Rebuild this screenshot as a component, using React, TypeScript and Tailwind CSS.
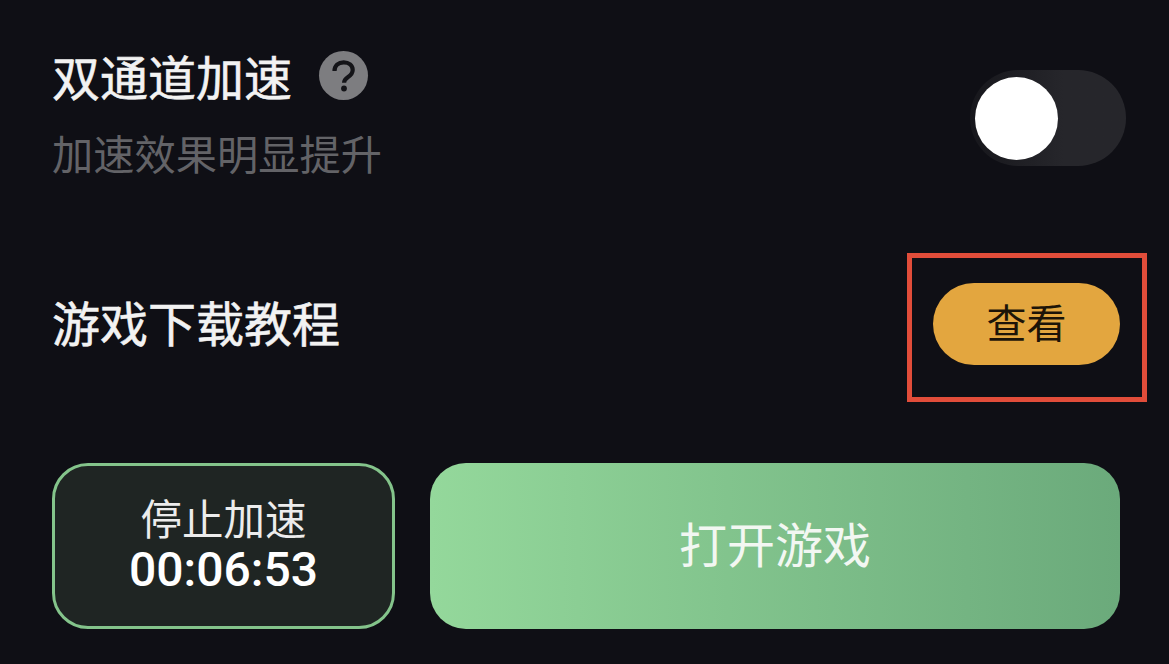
export default function App() {
  return (
    <div className="h-[664px] w-full overflow-hidden bg-[#0f0f15] pl-[52px] pr-[49px] font-['Noto_Sans_CJK_SC','Liberation_Sans',sans-serif]">
      {/* Dual channel row */}
      <div className="flex items-start justify-between pt-[43px]">
        <div>
          <div className="flex h-[64px] items-center">
            <span className="text-[48px] leading-[64px] text-[#f2f2f2] [-webkit-text-stroke:0.6px_#f2f2f2]">双通道加速</span>
            <span className="ml-[27px] flex h-[49px] w-[49px] items-center justify-center rounded-full bg-[#7d7d80]">
              <svg viewBox="0 0 49 49" className="h-[49px] w-[49px]" fill="none">
                <path d="M15.5 20c0-5.4 4-8.7 9.2-8.7 5 0 9 3 9 7.7 0 3.6-2.2 5.3-4.6 6.9-2.4 1.6-4 3-4 5.9" stroke="#141418" strokeWidth="4.2" />
                <circle cx="25" cy="37.5" r="2.9" fill="#141418" />
              </svg>
            </span>
          </div>
          <p className="mt-[17px] text-[41.25px] leading-[56px] text-[#636367]">加速效果明显提升</p>
        </div>
        <div className="-mr-[6px] mt-[27px] flex h-[96px] w-[156px] items-center rounded-full bg-gradient-to-r from-[#17171c] to-[#26262b] to-60% pl-[5px]">
          <div className="h-[83px] w-[83px] rounded-full bg-white" />
        </div>
      </div>

      {/* Tutorial row */}
      <div className="mt-[103px] flex items-center justify-between">
        <span className="pb-[6px] text-[48px] leading-[64px] text-[#f2f2f2] [-webkit-text-stroke:0.6px_#f2f2f2]">游戏下载教程</span>
        <div className="relative">
          <button className="flex h-[82px] w-[187px] items-center justify-center rounded-full bg-[#e3a63f] pb-[6px] text-[40px] leading-none text-[#1c1408]">
            查看
          </button>
          <div className="absolute -left-[26px] -right-[27px] -top-[30px] -bottom-[37px] border-[5px] border-[#e14d3a]" />
        </div>
      </div>

      {/* Bottom actions */}
      <div className="mt-[98px] flex h-[166px] gap-[35px]">
        <button className="flex w-[343px] shrink-0 flex-col items-center justify-center rounded-[36px] border-[3px] border-[#84c48b] bg-[#1f2523] pb-[5px] text-white">
          <span className="text-[41.5px] leading-[50px] text-[#ececec]">停止加速</span>
          <span className="mt-[3px] font-['Roboto',sans-serif] text-[48px] leading-[50px] font-medium">00:06:53</span>
        </button>
        <button className="flex-1 rounded-[36px] bg-gradient-to-r from-[#94d89b] to-[#6baa7b] pb-[8px] text-[48px] leading-none text-[#f2f7f2]">
          打开游戏
        </button>
      </div>
    </div>
  );
}
